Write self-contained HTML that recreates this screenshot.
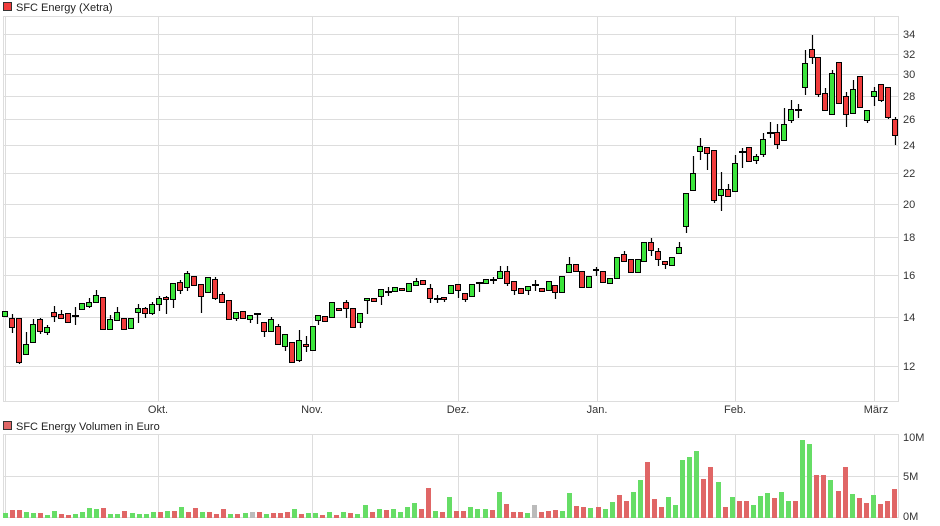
<!DOCTYPE html>
<html><head><meta charset="utf-8"><style>
html,body{margin:0;padding:0;background:#fff;}
svg{display:block;font-family:"Liberation Sans",sans-serif;}
</style></head><body>
<svg width="940" height="526" viewBox="0 0 940 526" xmlns="http://www.w3.org/2000/svg">
<rect width="940" height="526" fill="#fff"/>
<rect x="3.5" y="2.5" width="8" height="8" fill="#f03c3c" stroke="#333"/>
<text x="16" y="11" font-size="11" fill="#222">SFC Energy (Xetra)</text>
<g stroke="#dddddd" stroke-width="1" fill="none">
<rect x="3.5" y="16.5" width="895" height="385"/>
<path d="M3 34.5H898M3 54.5H898M3 74.5H898M3 96.5H898M3 119.5H898M3 145.5H898M3 173.5H898M3 204.5H898M3 237.5H898M3 275.5H898M3 317.5H898M3 366.5H898"/>
<path d="M5.5 17V401M158.5 17V401M312.5 17V401M458.5 17V401M597.5 17V401M735.5 17V401M874.5 17V401"/>
</g>
<g font-size="11" fill="#333">
<text x="903" y="38">34</text><text x="903" y="58">32</text><text x="903" y="78">30</text><text x="903" y="100">28</text><text x="903" y="123">26</text><text x="903" y="149">24</text><text x="903" y="177">22</text><text x="903" y="208">20</text><text x="903" y="241">18</text><text x="903" y="279">16</text><text x="903" y="321">14</text><text x="903" y="370">12</text>
</g>
<g font-size="11" fill="#333" text-anchor="middle">
<text x="158" y="413">Okt.</text><text x="312" y="413">Nov.</text><text x="458" y="413">Dez.</text><text x="597" y="413">Jan.</text><text x="735" y="413">Feb.</text><text x="876" y="413">März</text>
</g>
<path stroke="#000" stroke-width="1.2" fill="none" d="M12.5 314V333M19.5 318V364M26.5 332V354M33.5 319V342M40.5 318V334M47.5 325V335M54.5 306V322M61.5 310V318M75.5 307V325M89.5 298V308M96.5 290V302M110.5 315V329M117.5 307V320M138.5 304V323M145.5 307V318M152.5 302V315M159.5 296V311M166.5 296V314M173.5 283V308M180.5 280V294M187.5 271V291M201.5 284V313M215.5 277V300M222.5 292V303M236.5 312V321M250.5 315V323M257.5 313V324M264.5 322V337M271.5 317V331M278.5 324V344M285.5 334V351M299.5 330V362M306.5 336V352M318.5 315V325M346.5 300V318M360.5 313V328M367.5 298V314M381.5 289V305M388.5 287V296M416.5 278V285M430.5 284V303M437.5 295V303M444.5 297V302M458.5 284V298M465.5 293V302M479.5 283V292M493.5 277V284M500.5 266V278M507.5 266V286M514.5 281V295M528.5 286V295M535.5 280V291M555.5 285V299M569.5 257V272M596.5 267V276M624.5 251V261M651.5 238V256M658.5 248V266M665.5 261V269M679.5 242V253M686.5 193V233M693.5 156V190M700.5 138V160M707.5 147V170M714.5 150V203M721.5 172V211M728.5 184V196M735.5 155V191M742.5 148V168M756.5 154V164M763.5 133V157M770.5 122V138M777.5 124V149M784.5 108V140M791.5 100V123M798.5 104V118M805.5 50V95M812.5 35V64M818.5 57V97M825.5 88V110M832.5 70V114M846.5 92V127M853.5 80V113M867.5 110V123M874.5 87V106M881.5 84V102M888.5 87V119M895.5 117V145"/>
<g fill="#3be43b" stroke="#000" stroke-width="1">
<rect x="2.5" y="311.5" width="5" height="5"/><rect x="23.5" y="344.5" width="5" height="10"/><rect x="30.5" y="324.5" width="5" height="18"/><rect x="44.5" y="327.5" width="5" height="5"/><rect x="79.5" y="303.5" width="5" height="6"/><rect x="86.5" y="302.5" width="5" height="4"/><rect x="93.5" y="295.5" width="5" height="7"/><rect x="107.5" y="319.5" width="5" height="10"/><rect x="114.5" y="312.5" width="5" height="8"/><rect x="128.5" y="318.5" width="5" height="10"/><rect x="135.5" y="308.5" width="5" height="4"/><rect x="149.5" y="304.5" width="5" height="9"/><rect x="156.5" y="298.5" width="5" height="6"/><rect x="170.5" y="283.5" width="5" height="16"/><rect x="184.5" y="273.5" width="5" height="14"/><rect x="205.5" y="277.5" width="5" height="15"/><rect x="233.5" y="312.5" width="5" height="6"/><rect x="247.5" y="315.5" width="5" height="4"/><rect x="268.5" y="319.5" width="5" height="12"/><rect x="282.5" y="334.5" width="5" height="12"/><rect x="296.5" y="340.5" width="5" height="20"/><rect x="310.5" y="326.5" width="5" height="24"/><rect x="315.5" y="315.5" width="5" height="5"/><rect x="329.5" y="302.5" width="5" height="15"/><rect x="357.5" y="313.5" width="5" height="9"/><rect x="364.5" y="298.5" width="5" height="2"/><rect x="378.5" y="289.5" width="5" height="7"/><rect x="392.5" y="287.5" width="5" height="4"/><rect x="406.5" y="283.5" width="5" height="8"/><rect x="413.5" y="281.5" width="5" height="4"/><rect x="448.5" y="285.5" width="5" height="8"/><rect x="469.5" y="284.5" width="5" height="12"/><rect x="483.5" y="279.5" width="5" height="4"/><rect x="497.5" y="271.5" width="5" height="7"/><rect x="525.5" y="286.5" width="5" height="4"/><rect x="546.5" y="281.5" width="5" height="9"/><rect x="559.5" y="276.5" width="5" height="16"/><rect x="566.5" y="264.5" width="5" height="8"/><rect x="586.5" y="276.5" width="5" height="11"/><rect x="607.5" y="278.5" width="5" height="5"/><rect x="614.5" y="257.5" width="5" height="21"/><rect x="635.5" y="259.5" width="5" height="13"/><rect x="641.5" y="242.5" width="5" height="19"/><rect x="669.5" y="257.5" width="5" height="8"/><rect x="676.5" y="247.5" width="5" height="6"/><rect x="683.5" y="193.5" width="5" height="33"/><rect x="690.5" y="173.5" width="5" height="17"/><rect x="697.5" y="146.5" width="5" height="5"/><rect x="718.5" y="189.5" width="5" height="6"/><rect x="732.5" y="163.5" width="5" height="28"/><rect x="753.5" y="156.5" width="5" height="4"/><rect x="760.5" y="139.5" width="5" height="15"/><rect x="781.5" y="124.5" width="5" height="16"/><rect x="788.5" y="109.5" width="5" height="11"/><rect x="802.5" y="63.5" width="5" height="24"/><rect x="829.5" y="73.5" width="5" height="41"/><rect x="850.5" y="89.5" width="5" height="24"/><rect x="864.5" y="110.5" width="5" height="10"/><rect x="871.5" y="91.5" width="5" height="5"/>
</g>
<g fill="#f03c3c" stroke="#000" stroke-width="1">
<rect x="9.5" y="318.5" width="5" height="9"/><rect x="16.5" y="318.5" width="5" height="44"/><rect x="37.5" y="319.5" width="5" height="12"/><rect x="51.5" y="312.5" width="5" height="4"/><rect x="58.5" y="314.5" width="5" height="4"/><rect x="65.5" y="313.5" width="5" height="9"/><rect x="100.5" y="297.5" width="5" height="32"/><rect x="121.5" y="318.5" width="5" height="11"/><rect x="142.5" y="308.5" width="5" height="5"/><rect x="163.5" y="297.5" width="5" height="2"/><rect x="177.5" y="282.5" width="5" height="8"/><rect x="191.5" y="276.5" width="5" height="9"/><rect x="198.5" y="284.5" width="5" height="12"/><rect x="212.5" y="279.5" width="5" height="19"/><rect x="219.5" y="294.5" width="5" height="8"/><rect x="226.5" y="300.5" width="5" height="19"/><rect x="240.5" y="311.5" width="5" height="7"/><rect x="261.5" y="322.5" width="5" height="9"/><rect x="275.5" y="326.5" width="5" height="18"/><rect x="289.5" y="342.5" width="5" height="20"/><rect x="303.5" y="344.5" width="5" height="2"/><rect x="322.5" y="316.5" width="5" height="5"/><rect x="336.5" y="308.5" width="5" height="2"/><rect x="343.5" y="302.5" width="5" height="6"/><rect x="350.5" y="308.5" width="5" height="19"/><rect x="371.5" y="298.5" width="5" height="3"/><rect x="399.5" y="288.5" width="5" height="2"/><rect x="420.5" y="280.5" width="5" height="4"/><rect x="427.5" y="288.5" width="5" height="10"/><rect x="441.5" y="297.5" width="5" height="2"/><rect x="455.5" y="284.5" width="5" height="6"/><rect x="462.5" y="293.5" width="5" height="6"/><rect x="504.5" y="271.5" width="5" height="12"/><rect x="511.5" y="281.5" width="5" height="9"/><rect x="518.5" y="288.5" width="5" height="5"/><rect x="539.5" y="288.5" width="5" height="3"/><rect x="552.5" y="285.5" width="5" height="7"/><rect x="573.5" y="264.5" width="5" height="7"/><rect x="579.5" y="271.5" width="5" height="16"/><rect x="593.5" y="269.5" width="5" height="1"/><rect x="600.5" y="271.5" width="5" height="11"/><rect x="621.5" y="254.5" width="5" height="7"/><rect x="628.5" y="259.5" width="5" height="13"/><rect x="648.5" y="242.5" width="5" height="8"/><rect x="655.5" y="251.5" width="5" height="8"/><rect x="662.5" y="261.5" width="5" height="3"/><rect x="704.5" y="147.5" width="5" height="6"/><rect x="711.5" y="150.5" width="5" height="50"/><rect x="725.5" y="189.5" width="5" height="7"/><rect x="746.5" y="147.5" width="5" height="14"/><rect x="774.5" y="132.5" width="5" height="12"/><rect x="809.5" y="49.5" width="5" height="8"/><rect x="815.5" y="57.5" width="5" height="37"/><rect x="822.5" y="93.5" width="5" height="17"/><rect x="836.5" y="62.5" width="5" height="41"/><rect x="843.5" y="96.5" width="5" height="18"/><rect x="857.5" y="76.5" width="5" height="31"/><rect x="878.5" y="84.5" width="5" height="16"/><rect x="885.5" y="87.5" width="5" height="30"/><rect x="892.5" y="119.5" width="5" height="16"/>
</g>
<path stroke="#000" stroke-width="2" fill="none" d="M72 316H79M254 314H261M385 292H392M434 299H441M476 283H483M490 280H497M532 285H539M739 152H746M767 133H774M795 110H802"/>
<rect x="3.5" y="421.5" width="8" height="8" fill="#e06666" stroke="#333"/>
<text x="16" y="430" font-size="11" fill="#222">SFC Energy Volumen in Euro</text>
<g stroke="#dddddd" fill="none">
<rect x="3.5" y="434.5" width="895" height="83"/>
<path d="M3 476.5H898"/>
<path d="M5.5 435V518M158.5 435V518M312.5 435V518M458.5 435V518M597.5 435V518M735.5 435V518M874.5 435V518"/>
</g>
<g font-size="11" fill="#333">
<text x="903" y="441">10M</text><text x="903" y="480">5M</text><text x="903" y="520">0M</text>
</g>
<g>
<rect x="3" y="513" width="5" height="5" fill="#66dd66"/><rect x="10" y="510" width="5" height="8" fill="#e06666"/><rect x="17" y="510" width="5" height="8" fill="#e06666"/><rect x="24" y="512" width="5" height="6" fill="#66dd66"/><rect x="31" y="513" width="5" height="5" fill="#66dd66"/><rect x="38" y="513" width="5" height="5" fill="#e06666"/><rect x="45" y="515" width="5" height="3" fill="#66dd66"/><rect x="52" y="511" width="5" height="7" fill="#66dd66"/><rect x="59" y="514" width="5" height="4" fill="#e06666"/><rect x="66" y="515" width="5" height="3" fill="#e06666"/>
<rect x="73" y="514" width="5" height="4" fill="#66dd66"/><rect x="80" y="512" width="5" height="6" fill="#66dd66"/><rect x="87" y="508" width="5" height="10" fill="#66dd66"/><rect x="94" y="509" width="5" height="9" fill="#66dd66"/><rect x="101" y="508" width="5" height="10" fill="#e06666"/><rect x="108" y="514" width="5" height="4" fill="#66dd66"/><rect x="115" y="514" width="5" height="4" fill="#66dd66"/><rect x="122" y="511" width="5" height="7" fill="#e06666"/><rect x="130" y="513" width="5" height="5" fill="#66dd66"/><rect x="137" y="514" width="5" height="4" fill="#66dd66"/>
<rect x="144" y="514" width="5" height="4" fill="#66dd66"/><rect x="151" y="512" width="5" height="6" fill="#66dd66"/><rect x="158" y="512" width="5" height="6" fill="#e06666"/><rect x="165" y="511" width="5" height="7" fill="#66dd66"/><rect x="172" y="511" width="5" height="7" fill="#e06666"/><rect x="179" y="507" width="5" height="11" fill="#66dd66"/><rect x="186" y="512" width="5" height="6" fill="#e06666"/><rect x="193" y="508" width="5" height="10" fill="#e06666"/><rect x="200" y="512" width="5" height="6" fill="#66dd66"/><rect x="207" y="512" width="5" height="6" fill="#e06666"/>
<rect x="214" y="514" width="5" height="4" fill="#e06666"/><rect x="221" y="509" width="5" height="9" fill="#e06666"/><rect x="228" y="514" width="5" height="4" fill="#66dd66"/><rect x="235" y="514" width="5" height="4" fill="#e06666"/><rect x="243" y="513" width="5" height="5" fill="#66dd66"/><rect x="250" y="512" width="5" height="6" fill="#bbbbbb"/><rect x="257" y="512" width="5" height="6" fill="#e06666"/><rect x="264" y="514" width="5" height="4" fill="#66dd66"/><rect x="271" y="513" width="5" height="5" fill="#e06666"/><rect x="278" y="513" width="5" height="5" fill="#e06666"/>
<rect x="285" y="512" width="5" height="6" fill="#e06666"/><rect x="292" y="509" width="5" height="9" fill="#66dd66"/><rect x="299" y="514" width="5" height="4" fill="#e06666"/><rect x="306" y="513" width="5" height="5" fill="#66dd66"/><rect x="313" y="513" width="5" height="5" fill="#66dd66"/><rect x="320" y="515" width="5" height="3" fill="#e06666"/><rect x="327" y="512" width="5" height="6" fill="#66dd66"/><rect x="334" y="515" width="5" height="3" fill="#e06666"/><rect x="341" y="512" width="5" height="6" fill="#66dd66"/><rect x="348" y="513" width="5" height="5" fill="#e06666"/>
<rect x="355" y="514" width="5" height="4" fill="#66dd66"/><rect x="363" y="505" width="5" height="13" fill="#66dd66"/><rect x="370" y="512" width="5" height="6" fill="#e06666"/><rect x="377" y="509" width="5" height="9" fill="#66dd66"/><rect x="384" y="510" width="5" height="8" fill="#e06666"/><rect x="391" y="509" width="5" height="9" fill="#66dd66"/><rect x="398" y="512" width="5" height="6" fill="#66dd66"/><rect x="405" y="507" width="5" height="11" fill="#66dd66"/><rect x="412" y="503" width="5" height="15" fill="#66dd66"/><rect x="419" y="509" width="5" height="9" fill="#e06666"/>
<rect x="426" y="488" width="5" height="30" fill="#e06666"/><rect x="433" y="511" width="5" height="7" fill="#66dd66"/><rect x="440" y="512" width="5" height="6" fill="#e06666"/><rect x="447" y="497" width="5" height="21" fill="#66dd66"/><rect x="454" y="511" width="5" height="7" fill="#e06666"/><rect x="461" y="511" width="5" height="7" fill="#e06666"/><rect x="468" y="507" width="5" height="11" fill="#66dd66"/><rect x="475" y="509" width="5" height="9" fill="#66dd66"/><rect x="483" y="509" width="5" height="9" fill="#66dd66"/><rect x="490" y="510" width="5" height="8" fill="#e06666"/>
<rect x="497" y="492" width="5" height="26" fill="#66dd66"/><rect x="504" y="504" width="5" height="14" fill="#e06666"/><rect x="511" y="512" width="5" height="6" fill="#e06666"/><rect x="518" y="512" width="5" height="6" fill="#e06666"/><rect x="525" y="513" width="5" height="5" fill="#66dd66"/><rect x="532" y="505" width="5" height="13" fill="#bbbbbb"/><rect x="539" y="512" width="5" height="6" fill="#e06666"/><rect x="546" y="511" width="5" height="7" fill="#e06666"/><rect x="553" y="510" width="5" height="8" fill="#e06666"/><rect x="560" y="511" width="5" height="7" fill="#66dd66"/>
<rect x="567" y="493" width="5" height="25" fill="#66dd66"/><rect x="574" y="506" width="5" height="12" fill="#e06666"/><rect x="581" y="507" width="5" height="11" fill="#e06666"/><rect x="588" y="508" width="5" height="10" fill="#66dd66"/><rect x="596" y="507" width="5" height="11" fill="#e06666"/><rect x="603" y="509" width="5" height="9" fill="#66dd66"/><rect x="610" y="502" width="5" height="16" fill="#66dd66"/><rect x="617" y="495" width="5" height="23" fill="#e06666"/><rect x="624" y="501" width="5" height="17" fill="#e06666"/><rect x="631" y="492" width="5" height="26" fill="#66dd66"/>
<rect x="638" y="480" width="5" height="38" fill="#66dd66"/><rect x="645" y="462" width="5" height="56" fill="#e06666"/><rect x="652" y="499" width="5" height="19" fill="#e06666"/><rect x="659" y="507" width="5" height="11" fill="#e06666"/><rect x="666" y="497" width="5" height="21" fill="#66dd66"/><rect x="673" y="505" width="5" height="13" fill="#66dd66"/><rect x="680" y="460" width="5" height="58" fill="#66dd66"/><rect x="687" y="457" width="5" height="61" fill="#66dd66"/><rect x="694" y="451" width="5" height="67" fill="#66dd66"/><rect x="701" y="479" width="5" height="39" fill="#e06666"/>
<rect x="708" y="467" width="5" height="51" fill="#e06666"/><rect x="716" y="482" width="5" height="36" fill="#66dd66"/><rect x="723" y="507" width="5" height="11" fill="#e06666"/><rect x="730" y="497" width="5" height="21" fill="#66dd66"/><rect x="737" y="501" width="5" height="17" fill="#e06666"/><rect x="744" y="501" width="5" height="17" fill="#e06666"/><rect x="751" y="505" width="5" height="13" fill="#66dd66"/><rect x="758" y="496" width="5" height="22" fill="#66dd66"/><rect x="765" y="493" width="5" height="25" fill="#66dd66"/><rect x="772" y="498" width="5" height="20" fill="#e06666"/>
<rect x="779" y="492" width="5" height="26" fill="#66dd66"/><rect x="786" y="501" width="5" height="17" fill="#66dd66"/><rect x="793" y="501" width="5" height="17" fill="#e06666"/><rect x="800" y="440" width="5" height="78" fill="#66dd66"/><rect x="807" y="444" width="5" height="74" fill="#66dd66"/><rect x="814" y="475" width="5" height="43" fill="#e06666"/><rect x="821" y="475" width="5" height="43" fill="#e06666"/><rect x="828" y="480" width="5" height="38" fill="#66dd66"/><rect x="836" y="491" width="5" height="27" fill="#e06666"/><rect x="843" y="467" width="5" height="51" fill="#e06666"/>
<rect x="850" y="494" width="5" height="24" fill="#66dd66"/><rect x="857" y="498" width="5" height="20" fill="#e06666"/><rect x="864" y="503" width="5" height="15" fill="#e06666"/><rect x="871" y="495" width="5" height="23" fill="#66dd66"/><rect x="878" y="504" width="5" height="14" fill="#e06666"/><rect x="885" y="501" width="5" height="17" fill="#e06666"/><rect x="892" y="489" width="5" height="29" fill="#e06666"/>
</g>
</svg>
</body></html>
